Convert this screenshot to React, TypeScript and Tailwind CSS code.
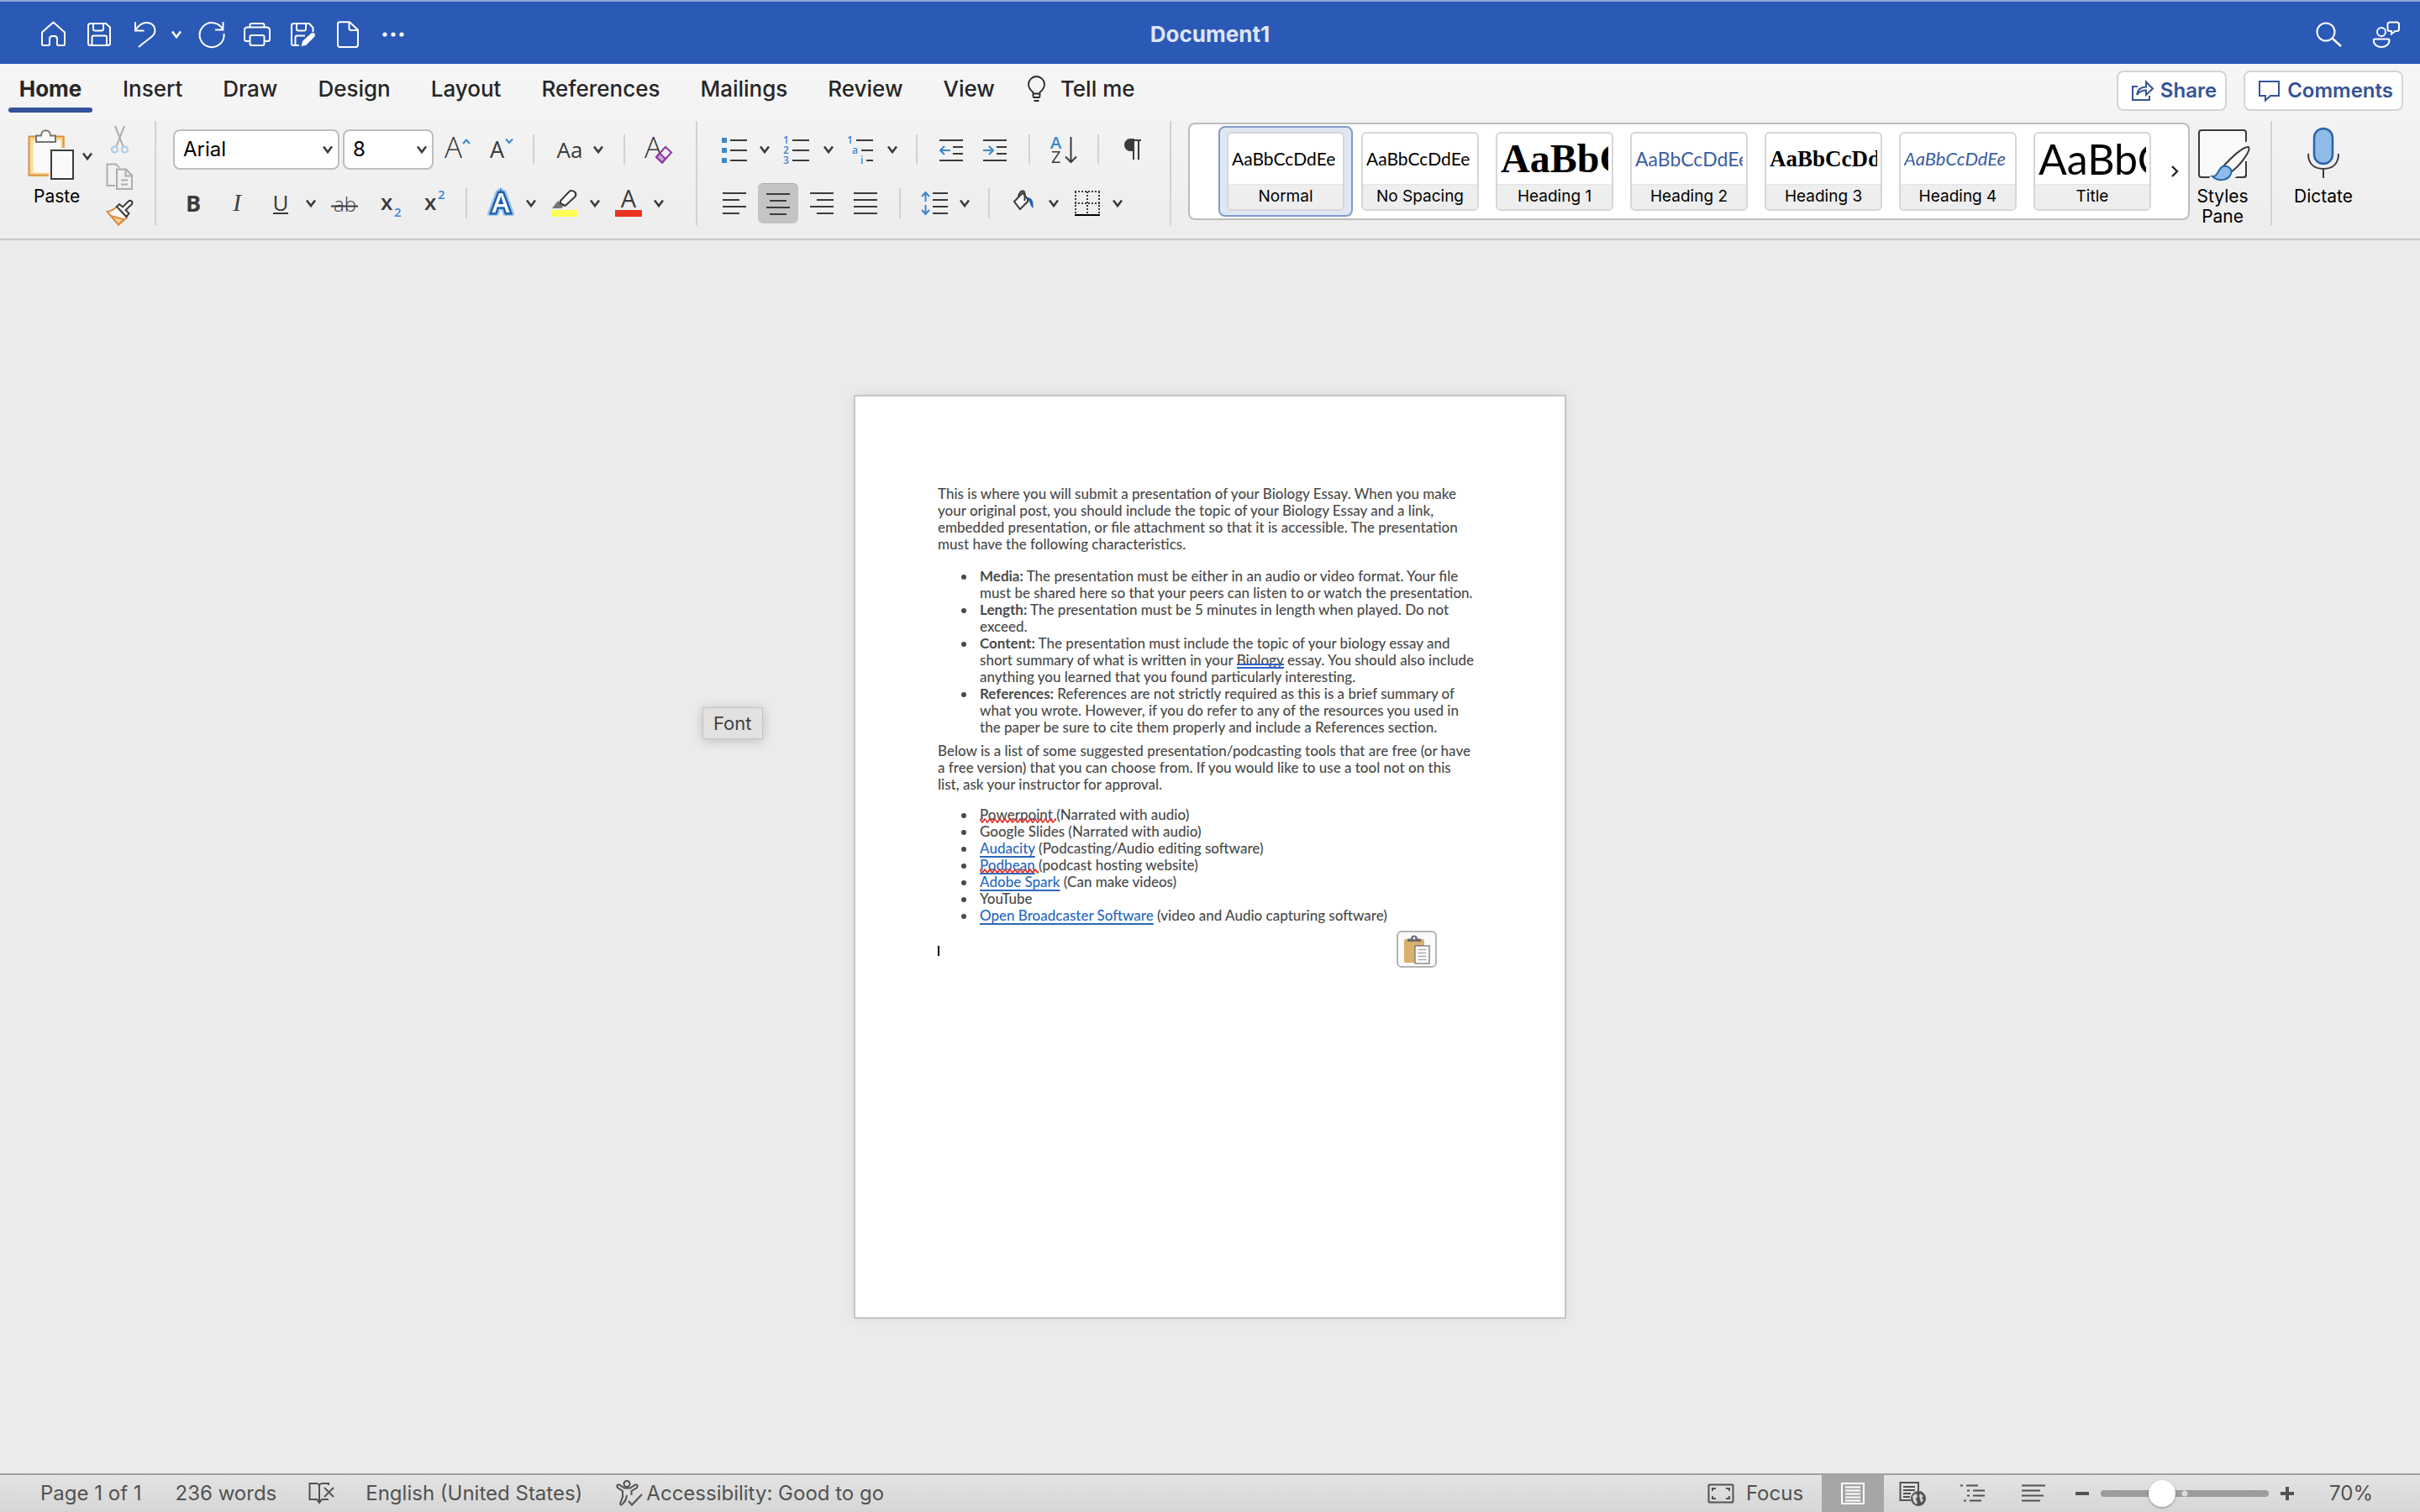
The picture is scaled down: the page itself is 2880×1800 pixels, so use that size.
import type { ReactNode } from "react";

const TABS = [
  "Insert",
  "Draw",
  "Design",
  "Layout",
  "References",
  "Mailings",
  "Review",
  "View",
];

const STYLES = [
  { name: "Normal", look: "font-['Lato',sans-serif] text-[21px] text-black", selected: true },
  { name: "No Spacing", look: "font-['Lato',sans-serif] text-[21px] text-black" },
  { name: "Heading 1", look: "font-['Liberation_Serif',serif] text-[48px] font-bold text-black" },
  { name: "Heading 2", look: "font-['Lato',sans-serif] text-[23px] text-[#3a5da0]" },
  { name: "Heading 3", look: "font-['Liberation_Serif',serif] text-[27px] font-bold text-black" },
  { name: "Heading 4", look: "font-['Lato',sans-serif] text-[22px] italic text-[#3a5da0]" },
  { name: "Title", look: "font-['Lato',sans-serif] text-[50px] text-black" },
];

function Icon({
  children,
  className = "size-8",
  box = "0 0 32 32",
}: {
  children: ReactNode;
  className?: string;
  box?: string;
}) {
  return (
    <svg
      viewBox={box}
      fill="none"
      stroke="currentColor"
      strokeWidth={2}
      aria-hidden="true"
      className={`shrink-0 overflow-visible ${className}`}
    >
      {children}
    </svg>
  );
}

function Chevron({ className = "" }: { className?: string }) {
  return (
    <Icon box="0 0 12 12" className={`size-3 ${className}`}>
      <path d="M1 2.5 L6 9 L11 2.5" strokeWidth={2.6} />
    </Icon>
  );
}

function Tool({
  label,
  className = "",
  children,
}: {
  label: string;
  className?: string;
  children: ReactNode;
}) {
  return (
    <button
      type="button"
      aria-label={label}
      className={`flex shrink-0 items-center justify-center ${className}`}
    >
      {children}
    </button>
  );
}

// Thin line between tools of the same group
function Rule({ className = "" }: { className?: string }) {
  return <span className={`h-9 w-0.5 shrink-0 bg-[#d2d2d2] ${className}`} />;
}

// Full height line between groups
function GroupRule() {
  return <span className="h-31 w-0.5 shrink-0 bg-[#d2d2d2]" />;
}

function TitleBar() {
  return (
    <header className="grid h-19 grid-cols-[1fr_auto_1fr] items-center border-t-2 border-[#8fa8da] bg-[#2b59b6] px-6 pt-1 text-white">
      <div className="flex items-center pl-6">
        <Tool label="Home">
          <Icon>
            <path d="M15.5 1.5 L2 13.5 V27.5 Q2 29 3.5 29 H9.5 Q11 29 11 27.5 V21.5 Q11 18 14 18 H17 Q20 18 20 21.5 V27.5 Q20 29 21.5 29 H27.5 Q29 29 29 27.5 V13.5 Z" strokeLinejoin="round" />
          </Icon>
        </Tool>
        <Tool label="Save" className="ml-5.5">
          <Icon>
            <path d="M3 5.5 Q3 3 5.5 3 H24 L29 7.5 V26.5 Q29 29 26.5 29 H5.5 Q3 29 3 26.5 Z M9 3 V9.5 Q9 11.5 11 11.5 H19 Q21 11.5 21 9.5 V3 M7.5 29 V19.5 Q7.5 17.5 9.5 17.5 H23 Q25 17.5 25 19.5 V29" />
          </Icon>
        </Tool>
        <Tool label="Undo" className="ml-5.5">
          <Icon>
            <path d="M5 1 V11.5 H15.5 M5 11.5 C9 4.5 15 1.5 20.5 2.2 C27 3 30.5 10 27 16 C25.5 18.6 16 25 9 31" />
          </Icon>
        </Tool>
        <Tool label="Undo options" className="ml-4">
          <Chevron />
        </Tool>
        <Tool label="Redo" className="ml-5">
          <Icon>
            <path d="M29.5 1 V10.5 H20 M29 10 A14.5 14.5 0 1 0 30.5 15" />
          </Icon>
        </Tool>
        <Tool label="Print" className="ml-5.5">
          <Icon>
            <path d="M8 24 H3.5 Q1 24 1 21.5 V11 Q1 7.5 4.5 7.5 H27.5 Q31 7.5 31 11 V21.5 Q31 24 28.5 24 H24.5 M7.5 7.5 V5 Q7.5 3 9.5 3 H22.5 Q24.5 3 24.5 5 V7.5 M7.5 19 Q7.5 17 9.5 17 H22.5 Q24.5 17 24.5 19 V27 Q24.5 29 22.5 29 H9.5 Q7.5 29 7.5 27 Z" />
          </Icon>
        </Tool>
        <Tool label="Save as" className="ml-5.5">
          <Icon>
            <path d="M28.5 13 V8 L24 3 H5.5 Q3 3 3 5.5 V26.5 Q3 29 5.5 29 H12 M9 3 V9.5 Q9 11.5 11 11.5 H18 Q20 11.5 20 9.5 V3 M7.5 29 V19.5 Q7.5 17.5 9.5 17.5 H19" />
            <path d="M14.5 30 L16 24 L26.5 14.5 Q29 13.5 30.5 15 Q32 17 30 19 L20 29 Z" fill="currentColor" stroke="none" />
          </Icon>
        </Tool>
        <Tool label="New document" className="ml-5.5">
          <Icon>
            <path d="M4 3.5 Q4 1.2 6.5 1.2 H18 L28 10.5 V28 Q28 31 25.5 31 H6.5 Q4 31 4 28 Z M17.5 1.5 V8.5 Q17.5 11 20 11 H27.5" />
          </Icon>
        </Tool>
        <Tool label="More" className="ml-5.5">
          <Icon>
            <g fill="currentColor" stroke="none">
              <circle cx="6" cy="16" r="2.6" />
              <circle cx="16" cy="16" r="2.6" />
              <circle cx="26" cy="16" r="2.6" />
            </g>
          </Icon>
        </Tool>
      </div>
      <h1 className="text-[26px] font-bold leading-8 text-[#dde5f5]">Document1</h1>
      <div className="flex items-center justify-end gap-9">
        <Tool label="Search">
          <Icon>
            <circle cx="12" cy="13" r="10.5" />
            <path d="M19.5 20.5 L30 30" strokeWidth={2.4} />
          </Icon>
        </Tool>
        <Tool label="Coauthors">
          <Icon>
            <circle cx="10" cy="13" r="5" />
            <path d="M2 21.5 H18 Q19.5 21.5 19.5 23 C19.5 28 15 31 10 31 C5 31 0.8 28 0.8 23 Q0.8 21.5 2 21.5 Z M20 1.5 H28.5 Q31 1.5 31 4 V9.5 Q31 12 28.5 12 H26.5 L22 15.5 V12 H20 Q17.5 12 17.5 9.5 V4 Q17.5 1.5 20 1.5 Z" />
          </Icon>
        </Tool>
      </div>
    </header>
  );
}

function TabRow() {
  return (
    <nav className="flex h-17 items-start pl-2.5 pr-5 text-[26px] leading-8 text-[#262626]">
      <a href="#home" className="flex w-25 flex-col items-center gap-1.5 pt-3.5 font-bold">
        Home
        <span className="h-1.5 w-full rounded-full bg-[#34539a]" />
      </a>
      <div className="flex items-center gap-12 pl-9 pt-3.5 font-medium">
        {TABS.map((tab) => (
          <a key={tab} href={`#${tab.toLowerCase()}`}>
            {tab}
          </a>
        ))}
      </div>
      <button type="button" className="flex items-center gap-3 pl-8.5 pt-3.5 font-medium">
        <Icon className="size-8">
          <path d="M11.5 24 V20 C8 17 6 14.5 6 10.5 A9.5 9.5 0 0 1 25 10.5 C25 14.5 23 17 19.5 20 V24 Q19.5 26 18 26 H13 Q11.5 26 11.5 24 Z M11.5 21.5 H19.5 M12.5 30 H18.5" strokeWidth={1.8} />
        </Icon>
        Tell me
      </button>
      <div className="ml-auto flex gap-5 pt-2 font-semibold text-[#34539a]">
        <button type="button" className="flex h-12 items-center gap-1.5 rounded-lg border-2 border-[#d4d4d4] bg-white pl-4 pr-2.5 text-[24px]">
          <Icon className="size-7" box="0 0 28 28">
            <path d="M7 9 H1 V25 H21 V20 M6 19 C7 12 11 9.5 17 9.5 V3.5 L25 11.5 L17 19 V13.5 C12 13.5 9 15 6 19 Z" />
          </Icon>
          Share
        </button>
        <button type="button" className="flex h-12 items-center gap-1.5 rounded-lg border-2 border-[#d4d4d4] bg-white pl-4 pr-2.5 text-[24px]">
          <Icon className="size-7" box="0 0 28 28">
            <path d="M1 3 H24 V20 H14 L8 25.5 V20 H1 Z" />
          </Icon>
          Comments
        </button>
      </div>
    </nav>
  );
}

function ClipboardGroup() {
  return (
    <div className="flex w-46 shrink-0 pl-8">
      <div className="flex w-20 flex-col pt-2.5">
        <button type="button" className="flex flex-col gap-1">
          <span className="flex items-center gap-2.5">
            <Icon box="0 0 56 64" className="h-16 w-14">
              <rect x="5" y="11" width="38" height="43" fill="#fafafa" stroke="#f5dc98" strokeWidth={5} />
              <rect x="2.5" y="8.5" width="41" height="46" stroke="#e08c44" />
              <path d="M11 15 V7.5 H17 C17 -1 28 -1 28 7.5 H34 V15 Z" fill="#fafafa" stroke="#76746f" />
              <rect x="26" y="22" width="30" height="40" fill="#f3f3f3" stroke="none" />
              <rect x="29" y="25" width="26" height="34" fill="#fafafa" stroke="#3b3b3b" />
            </Icon>
            <Chevron className="text-[#3b3b3b]" />
          </span>
          <span className="pl-2 text-left text-[21px] leading-6 text-black">Paste</span>
        </button>
      </div>
      <div className="flex flex-col gap-3 pl-3.5 pt-1.5">
        <Tool label="Cut">
          <Icon>
            <path d="M11 0 L20.5 24 M22 0 L12.5 24" stroke="#a9a9a9" />
            <circle cx="10.5" cy="28" r="3.5" stroke="#a9cbe8" />
            <circle cx="22.5" cy="28" r="3.5" stroke="#a9cbe8" />
          </Icon>
        </Tool>
        <Tool label="Copy">
          <Icon>
            <path d="M11 27 H1.5 V1.5 H12 L16 5.5 M13 7.5 H24 L31 15 V31 H13 Z M23.5 7.5 V15.5 H31 M18 20.5 H26 M18 25.5 H26" stroke="#adadad" />
          </Icon>
        </Tool>
        <Tool label="Format painter">
          <Icon>
            <path d="M1.5 14 Q8 13 13 8 L25 21 L15 29.5 Z" fill="#fafafa" stroke="#e08c44" />
            <path d="M6 19 L21 23 L15 29.5 Z" fill="#f5dc98" stroke="#e08c44" />
            <path d="M13 8 L16 5 L20 8.500 L27 1.500 Q29 0 31 2 Q32 4 30.500 5.500 L23.500 12 L27.500 16 L24.500 20 Z" fill="#fafafa" stroke="#3b3b3b" />
          </Icon>
        </Tool>
      </div>
    </div>
  );
}

function FontGroup() {
  return (
    <div className="flex shrink-0 flex-col gap-4 pl-5 pt-2.5 text-[#3b3b3b]">
      <div className="flex h-12 items-center pr-7">
        <label className="relative">
          <span className="sr-only">Font name</span>
          <select className="h-12 w-49.5 appearance-none rounded-lg border-2 border-[#bdbdbd] bg-white px-2.5 text-[24px] leading-8 text-black">
            <option>Arial</option>
          </select>
          <Chevron className="pointer-events-none absolute right-2 top-4.5" />
        </label>
        <label className="relative ml-1">
          <span className="sr-only">Font size</span>
          <select className="h-12 w-27 appearance-none rounded-lg border-2 border-[#bdbdbd] bg-white px-2.5 text-[24px] leading-8 text-black">
            <option>8</option>
          </select>
          <Chevron className="pointer-events-none absolute right-2 top-4.5" />
        </label>
        <Tool label="Increase font size" className="ml-3.5">
          <Icon>
            <text x="-1" y="26" fontSize="35" fill="currentColor" stroke="none" className="font-['Open_Sans',sans-serif] font-light">A</text>
            <path d="M21 9 L25 4.5 L29 9" stroke="#3b87cb" />
          </Icon>
        </Tool>
        <Tool label="Decrease font size" className="ml-5">
          <Icon>
            <text x="1" y="26" fontSize="27" fill="currentColor" stroke="none" className="font-['Open_Sans',sans-serif]">A</text>
            <path d="M20 3.5 L24 8 L28 3.5" stroke="#3b87cb" />
          </Icon>
        </Tool>
        <Rule className="ml-5" />
        <Tool label="Change case" className="ml-6">
          <span className="w-9 font-['Open_Sans',sans-serif] text-[26px]">Aa</span>
          <Chevron className="ml-2.5" />
        </Tool>
        <Rule className="mx-6" />
        <Tool label="Clear formatting">
          <Icon>
            <text x="-1" y="26" fontSize="35" fill="currentColor" stroke="none" className="font-['Open_Sans',sans-serif] font-light">A</text>
            <path d="M13 25 L24 13 L31 19.5 L20 31.5 Z" fill="#f8f2fa" stroke="#8f36a3" />
            <path d="M13 25 L17 20.5 L24 27 L20 31.5 Z" fill="#cf9fdb" stroke="#8f36a3" />
          </Icon>
        </Tool>
      </div>
      <div className="flex h-12 items-center pl-2">
        <Tool label="Bold" className="w-8 font-['Open_Sans',sans-serif] text-[27px] font-bold">
          B
        </Tool>
        <Tool label="Italic" className="ml-5 w-8 font-['Liberation_Serif',serif] text-[29px] italic">
          I
        </Tool>
        <Tool label="Underline" className="ml-5 w-8 font-['Open_Sans',sans-serif] text-[26px]">
          <span className="border-b-2 border-[#3b3b3b] leading-6">U</span>
        </Tool>
        <Chevron className="ml-3.5" />
        <Tool label="Strikethrough" className="ml-4.5">
          <Icon>
            <text x="3" y="26" fontSize="24" fill="currentColor" stroke="none" className="font-['Open_Sans',sans-serif] font-light">ab</text>
            <path d="M0 19.5 H32" />
          </Icon>
        </Tool>
        <Tool label="Subscript" className="ml-6">
          <Icon>
            <text x="3" y="24" fontSize="26" fill="currentColor" stroke="none" className="font-['Open_Sans',sans-serif] font-semibold">x</text>
            <text x="19" y="31.5" fontSize="15" fill="#3b87cb" stroke="none" className="font-['Open_Sans',sans-serif] font-semibold">2</text>
          </Icon>
        </Tool>
        <Tool label="Superscript" className="ml-5">
          <Icon>
            <text x="3" y="24" fontSize="26" fill="currentColor" stroke="none" className="font-['Open_Sans',sans-serif] font-semibold">x</text>
            <text x="19" y="11" fontSize="15" fill="#3b87cb" stroke="none" className="font-['Open_Sans',sans-serif] font-semibold">2</text>
          </Icon>
        </Tool>
        <Rule className="ml-5" />
        <Tool label="Text effects" className="ml-6">
          <Icon className="size-8 [filter:drop-shadow(2px_0_0_#9cc4ea)_drop-shadow(-2px_0_0_#9cc4ea)_drop-shadow(0_1px_0_#9cc4ea)_drop-shadow(0_-1px_0_#9cc4ea)]">
            <text x="16" y="27" fontSize="32" textAnchor="middle" fill="#ffffff" stroke="#1f5fae" strokeWidth={5} paintOrder="stroke" className="font-['Open_Sans',sans-serif] font-semibold">A</text>
          </Icon>
        </Tool>
        <Chevron className="ml-3.5" />
        <Tool label="Highlight colour" className="ml-4.5">
          <Icon>
            <path d="M1 22 L8 13 L15 19 L12 22 Z" fill="#76746f" stroke="none" />
            <path d="M11 13 L22 1.5 Q25 0 28 2.5 Q30.5 5 28.5 8 L16.5 19 L11 16 Z" fill="#fafafa" />
            <rect x="0" y="24" width="32" height="8" fill="#ffff54" stroke="none" />
          </Icon>
        </Tool>
        <Chevron className="ml-3.5" />
        <Tool label="Font colour" className="ml-4.5">
          <Icon>
            <text x="16" y="21" fontSize="29" textAnchor="middle" fill="currentColor" stroke="none" className="font-['Open_Sans',sans-serif]">A</text>
            <rect x="0" y="24" width="32" height="8" fill="#ea3323" stroke="none" />
          </Icon>
        </Tool>
        <Chevron className="ml-3.5" />
      </div>
    </div>
  );
}

function ParagraphGroup() {
  return (
    <div className="flex shrink-0 flex-col gap-4 pl-7 pr-7 pt-2.5 text-[#3b3b3b]">
      <div className="flex h-12 items-center">
        <Tool label="Bullets">
          <Icon>
            <path d="M11 5 H31 M11 17 H31 M11 29 H31" />
            <path d="M1 5 H7 M1 17 H7 M1 29 H7" stroke="#3b87cb" strokeWidth={6} />
          </Icon>
        </Tool>
        <Chevron className="ml-3.5" />
        <Tool label="Numbering" className="ml-4">
          <Icon>
            <path d="M11 5 H31 M11 17 H31 M11 29 H31" />
            <g fill="#3b87cb" stroke="none" fontSize="12" className="font-['Open_Sans',sans-serif] font-semibold">
              <text x="0" y="9">1</text>
              <text x="0" y="21">2</text>
              <text x="0" y="33">3</text>
            </g>
          </Icon>
        </Tool>
        <Chevron className="ml-4" />
        <Tool label="Multilevel list" className="ml-4">
          <Icon>
            <path d="M11 5 H31 M17 17 H31 M23 29 H31" />
            <g fill="#3b87cb" stroke="none" fontSize="12" className="font-['Open_Sans',sans-serif] font-semibold">
              <text x="0" y="9">1</text>
              <text x="6" y="21">a</text>
              <text x="16" y="33">i</text>
            </g>
          </Icon>
        </Tool>
        <Chevron className="ml-4" />
        <Rule className="ml-5.5" />
        <Tool label="Decrease indent" className="ml-6">
          <Icon>
            <path d="M2 5 H30 M18 13 H30 M18 21 H30 M2 29 H30" />
            <path d="M15 17 H3 M8 12 L3 17 L8 22" stroke="#3b87cb" />
          </Icon>
        </Tool>
        <Tool label="Increase indent" className="ml-5">
          <Icon>
            <path d="M2 5 H30 M18 13 H30 M18 21 H30 M2 29 H30" />
            <path d="M2 17 H14 M9 12 L14 17 L9 22" stroke="#3b87cb" />
          </Icon>
        </Tool>
        <Rule className="ml-6" />
        <Tool label="Sort" className="ml-6">
          <Icon>
            <text x="0" y="14.5" fontSize="20" fill="#3b87cb" stroke="none" className="font-['Open_Sans',sans-serif] font-semibold">A</text>
            <text x="1" y="32" fontSize="20" fill="currentColor" stroke="none" className="font-['Open_Sans',sans-serif]">Z</text>
            <path d="M24.5 1 V31 M18 24.5 L24.5 31 L31 24.5" />
          </Icon>
        </Tool>
        <Rule className="ml-6" />
        <Tool label="Show formatting marks" className="ml-6">
          <Icon>
            <path d="M17 5 H26 M17 4 V28 M23 4 V28" />
            <path d="M17 4 H13 A6 6.5 0 0 0 13 17 H17 Z" fill="currentColor" />
          </Icon>
        </Tool>
      </div>
      <div className="flex h-12 items-center">
        <Tool label="Align left">
          <Icon>
            <path d="M2 4 H30 M2 12 H22 M2 20 H30 M2 28 H22" />
          </Icon>
        </Tool>
        <Tool label="Centre" className="ml-3 size-12 rounded-md border-t border-[#ababab] bg-[#c4c4c4]">
          <Icon>
            <path d="M2 4 H30 M6 12 H26 M2 20 H30 M6 28 H26" />
          </Icon>
        </Tool>
        <Tool label="Align right" className="ml-3">
          <Icon>
            <path d="M2 4 H30 M10 12 H30 M2 20 H30 M10 28 H30" />
          </Icon>
        </Tool>
        <Tool label="Justify" className="ml-5">
          <Icon>
            <path d="M2 4 H30 M2 12 H30 M2 20 H30 M2 28 H30" />
          </Icon>
        </Tool>
        <Rule className="ml-6" />
        <Tool label="Line spacing" className="ml-6">
          <Icon>
            <path d="M14 4 H32 M14 12 H32 M14 20 H32 M14 28 H32" />
            <path d="M5.5 3 V14 M1 8 L5.5 3 L10 8 M5.5 18 V29 M1 24 L5.5 29 L10 24" stroke="#3b87cb" />
          </Icon>
        </Tool>
        <Chevron className="ml-3.5" />
        <Rule className="ml-5.5" />
        <Tool label="Shading" className="ml-6">
          <Icon>
            <path d="M5 14 L15 3.5 L21 11 L21 14 L12 23 Z" fill="#fafafa" />
            <path d="M10 8 C12 0 17 0 17.5 4 L17.5 13" />
            <path d="M20 9 C27 9 28 15 27.5 22 C24 19 24 14 20 9 Z" fill="#1f5fae" stroke="none" />
          </Icon>
        </Tool>
        <Chevron className="ml-3.5" />
        <Tool label="Borders" className="ml-4.5">
          <Icon>
            <path d="M1 2 H31 M1 16 H31 M2 2 V28 M16 2 V28 M30 2 V28" strokeDasharray="2 2" />
            <path d="M1 30 H31" stroke="#000000" />
          </Icon>
        </Tool>
        <Chevron className="ml-3.5" />
      </div>
    </div>
  );
}

function StyleGallery() {
  return (
    <div className="mt-0.5 flex h-29 min-w-0 flex-1 items-center overflow-hidden rounded-lg border-2 border-[#bdbdbd] bg-white pl-8.5">
      {STYLES.map((style) => (
        <button
          key={style.name}
          type="button"
          className={
            style.selected
              ? "h-27 shrink-0 rounded-lg border-2 border-[#7f9bcb] bg-[#dfe7f3] px-2"
              : "h-27 shrink-0 border-2 border-transparent px-2"
          }
        >
          <span className="flex h-23.5 w-35 flex-col overflow-hidden rounded-md border-2 border-[#d6d6d6] bg-white">
            <span className="flex h-15 items-center overflow-hidden px-1">
              <span className={`w-32 overflow-hidden whitespace-nowrap text-left leading-15 ${style.look}`}>
                AaBbCcDdEe
              </span>
            </span>
            <span className="flex-1 border-t border-[#e4e4e4] bg-[#eeeeee] text-center text-[19px] leading-7 text-black">
              {style.name}
            </span>
          </span>
        </button>
      ))}
      <Tool label="More styles" className="ml-auto mr-2.5 text-[#262626]">
        <Icon box="0 0 12 16" className="h-4 w-3">
          <path d="M3 2 L9 8 L3 14" strokeWidth={2.4} />
        </Icon>
      </Tool>
    </div>
  );
}

function Ribbon() {
  return (
    <div className="flex h-35.5 items-start border-b-2 border-[#c8c8c8]">
      <ClipboardGroup />
      <GroupRule />
      <FontGroup />
      <GroupRule />
      <ParagraphGroup />
      <GroupRule />
      <div className="flex min-w-0 flex-1 pl-5">
        <StyleGallery />
      </div>
      <button type="button" className="flex w-24 shrink-0 flex-col items-center gap-2 pr-4.5 pt-1.5 text-[21px] leading-6 text-black">
        <Icon box="0 0 64 64" className="size-16">
          <path d="M4 8 Q4 5 7 5 H57 Q60 5 60 8 V58 Q60 61 57 61 H7 Q4 61 4 58 Z" fill="#fafafa" stroke="#3b3b3b" />
          <path d="M16 62 L34 44 L61 18 V26 L62 52 L46 62 Z" fill="#f6f6f6" stroke="none" />
          <path d="M60 42 V58 Q60 61 57 61 H49" stroke="#3b3b3b" />
          <path d="M33 48 C40 40 56 24 63 25 C66 29 54 46 42 55 Z" fill="#fafafa" stroke="#3b3b3b" />
          <path d="M20 60 C27 61 26 50 33 48 C40 47 44 52 42 57 C38 66 26 66 20 60 Z" fill="#8fbbe8" stroke="#2a64ad" />
        </Icon>
        <span>
          Styles
          <br />
          Pane
        </span>
      </button>
      <GroupRule />
      <button type="button" className="mr-20 flex shrink-0 flex-col items-center gap-2 pl-6.5 pt-1.5 text-[21px] leading-6 text-black">
        <Icon box="0 0 64 64" className="size-16">
          <rect x="21" y="3" width="22" height="42" rx="11" fill="#8fbbe8" stroke="#2a64ad" strokeWidth={2.5} />
          <path d="M14 33 C14 46 22 51 32 51 C42 51 50 46 50 33 M32 51 V62" stroke="#3b3b3b" />
        </Icon>
        Dictate
      </button>
    </div>
  );
}

function DocLink({ children }: { children: ReactNode }) {
  return (
    <a
      href="#link"
      className="text-[#2a69bd] underline decoration-2 underline-offset-3 [text-decoration-skip-ink:none]"
    >
      {children}
    </a>
  );
}

// Word with the red squiggle of the spell checker under it
function Misspelt({ id, children }: { id: string; children: ReactNode }) {
  return (
    <span className="relative whitespace-pre">
      {children}
      <svg className="absolute bottom-0 left-0 h-1.5 w-full" aria-hidden="true">
        <pattern id={id} width="6" height="6" patternUnits="userSpaceOnUse">
          <path d="M-1 0 L0 1 L3 5 L6 1 L7 0" fill="none" stroke="#e0342b" strokeWidth={1.7} />
        </pattern>
        <rect width="100%" height="6" fill={`url(#${id})`} />
      </svg>
    </span>
  );
}

function DocumentPage() {
  return (
    <article className="relative min-h-[1100px] w-[848px] border-2 border-[#c6c6c6] bg-white pl-24.5 pr-20 pt-26.5 font-['Lato',sans-serif] text-[17px] font-medium leading-5 text-[#4a4a4a] shadow-[0_0_14px_rgba(0,0,0,0.08)]">
      <p className="whitespace-nowrap">
        This is where you will submit a presentation of your Biology Essay. When you make
        <br />
        your original post, you should include the topic of your Biology Essay and a link,
        <br />
        embedded presentation, or file attachment so that it is accessible. The presentation
        <br />
        must have the following characteristics.
      </p>
      <ul className="mt-4.5 list-disc whitespace-nowrap pl-11.5 [&>li]:pl-1">
        <li>
          <b>Media:</b> The presentation must be either in an audio or video format. Your file
          <br />
          must be shared here so that your peers can listen to or watch the presentation.
        </li>
        <li>
          <b>Length:</b> The presentation must be 5 minutes in length when played. Do not
          <br />
          exceed.
        </li>
        <li>
          <b>Content:</b> The presentation must include the topic of your biology essay and
          <br />
          short summary of what is written in your{" "}
          <span className="relative">
            Biology
            <span className="absolute bottom-0 left-0 h-1.5 w-full border-y-2 border-[#2f5fd0]" />
          </span>{" "}
          essay. You should also include
          <br />
          anything you learned that you found particularly interesting.
        </li>
        <li>
          <b>References:</b> References are not strictly required as this is a brief summary of
          <br />
          what you wrote. However, if you do refer to any of the resources you used in
          <br />
          the paper be sure to cite them properly and include a References section.
        </li>
      </ul>
      <p className="mt-2 whitespace-nowrap">
        Below is a list of some suggested presentation/podcasting tools that are free (or have
        <br />
        a free version) that you can choose from. If you would like to use a tool not on this
        <br />
        list, ask your instructor for approval.
      </p>
      <ul className="mt-4 list-disc pl-11.5 [&>li]:pl-1">
        <li>
          <Misspelt id="squiggle-powerpoint">Powerpoint </Misspelt>
          (Narrated with audio)
        </li>
        <li>Google Slides (Narrated with audio)</li>
        <li>
          <DocLink>Audacity</DocLink> (Podcasting/Audio editing software)
        </li>
        <li>
          <Misspelt id="squiggle-podbean">
            <DocLink>Podbean</DocLink>{" "}
          </Misspelt>
          (podcast hosting website)
        </li>
        <li>
          <DocLink>Adobe Spark</DocLink> (Can make videos)
        </li>
        <li>YouTube</li>
        <li>
          <DocLink>Open Broadcaster Software</DocLink> (video and Audio capturing software)
        </li>
      </ul>
      <div className="mt-6.5 h-3 w-0.5 bg-black" />
      <button
        type="button"
        aria-label="Paste options"
        className="absolute right-38 top-159 flex h-11 w-12 items-center justify-center rounded-md border-2 border-[#b4b4b4] bg-[#fafafa]"
      >
        <Icon box="0 0 32 36" className="h-9 w-8">
          <rect x="1" y="6" width="24" height="28" rx="2" fill="#d9b06c" stroke="none" />
          <path d="M5 9 V5.5 H9 C9 0 17 0 17 5.5 H21 V9 Z" fill="#6b6b6b" stroke="none" />
          <circle cx="13" cy="5" r="1.4" fill="#ffffff" stroke="none" />
          <rect x="14" y="14" width="17" height="21" fill="#ffffff" stroke="#6b6b6b" strokeWidth={1.2} />
          <path d="M17.5 18.5 H27.5 M17.5 22.5 H27.5 M17.5 26.5 H27.5 M17.5 30.5 H27.5" stroke="#a9a9a9" strokeWidth={1.6} />
        </Icon>
      </button>
    </article>
  );
}

function StatusBar() {
  return (
    <footer className="flex h-11.5 items-center border-t-2 border-[#a2a2a2] bg-linear-to-b from-[#e3e3e3] to-[#d6d6d6] pl-12 pr-14 text-[24px] text-[#525252]">
      <span>Page 1 of 1</span>
      <span className="ml-10">236 words</span>
      <Tool label="Proofing" className="ml-9.5">
        <Icon>
          <path d="M24 6 V4 H17 Q14 4 13 6 Q12 4 9 4 H1.5 V23 H10 L13 27 L16 23 H24 M13 6 V25 M19 9 L30 20 M30 9 L19 20" />
        </Icon>
      </Tool>
      <span className="ml-9">English (United States)</span>
      <button type="button" className="ml-10 flex items-center gap-1">
        <Icon>
          <circle cx="13" cy="4.5" r="3.5" />
          <path d="M8 28 Q6 31 5 28 L8 20 V13 L2 9 Q0 5 4 5.5 L10 9.5 H17 L23 5.5 Q27 5 25 9 L18.5 13 V18 M15 25 L19 29.5 L31 17 M13 18 Q12 25 8 28" />
        </Icon>
        Accessibility: Good to go
      </button>

      <button type="button" className="ml-auto flex items-center gap-3.5">
        <Icon box="0 0 32 24" className="h-6 w-8">
          <rect x="1.5" y="1.5" width="29" height="21" rx="1" />
          <path d="M6 9 V6 H10 M22 6 H26 V9 M26 15 V18 H22 M10 18 H6 V15" />
        </Icon>
        Focus
      </button>
      <Tool label="Print layout" className="ml-5.5 h-11 w-18.5 bg-[#a6a6a6] text-white">
        <Icon>
          <path d="M3 4 H29 V28 H3 Z M7 8.5 H25 M7 12.5 H25 M7 16.5 H25 M7 20.5 H25 M7 24.5 H25" />
        </Icon>
      </Tool>
      <Tool label="Web layout" className="ml-4.5">
        <Icon>
          <path d="M14 24 H1.5 V3 H23 V13 M5 8 H19 M5 12 H19 M5 16 H14 M5 20 H13" />
          <circle cx="23" cy="22" r="9" fill="currentColor" stroke="none" />
          <path d="M16 19 L20 16 L22 19 L20 23 L22 27 L20 29 L17 25 Z M25 16 L29 19 L27 21 L29 24 L26 27 L25 22 L24 19 Z" fill="#d4d4d4" stroke="none" />
        </Icon>
      </Tool>
      <Tool label="Outline" className="ml-10">
        <Icon>
          <path d="M1 6.5 H4 M8 6.5 H22 M9 12.5 H12 M16 12.5 H30 M9 18.5 H12 M16 18.5 H30 M5 24.5 H8 M12 24.5 H26" />
        </Icon>
      </Tool>
      <Tool label="Draft" className="ml-10">
        <Icon>
          <path d="M2 6.5 H30 M2 12.5 H24 M2 18.5 H28 M2 24.5 H24" />
        </Icon>
      </Tool>
      <Tool label="Zoom out" className="ml-8.5">
        <Icon box="0 0 16 16" className="size-4">
          <path d="M0 8 H16" strokeWidth={4} />
        </Icon>
      </Tool>
      <input
        type="range"
        aria-label="Zoom"
        min={0}
        max={100}
        defaultValue={34}
        className="ml-3.5 h-2 w-50 appearance-none rounded-full bg-[#9c9c9c] bg-[radial-gradient(circle_at_center,#dcdcdc_3px,transparent_4px)] [&::-webkit-slider-thumb]:size-8 [&::-webkit-slider-thumb]:appearance-none [&::-webkit-slider-thumb]:rounded-full [&::-webkit-slider-thumb]:bg-white [&::-webkit-slider-thumb]:shadow-[0_1px_3px_rgba(0,0,0,0.35)]"
      />
      <Tool label="Zoom in" className="ml-3.5">
        <Icon box="0 0 16 16" className="size-4">
          <path d="M0 8 H16 M8 0 V16" strokeWidth={4} />
        </Icon>
      </Tool>
      <span className="ml-10.5">70%</span>
    </footer>
  );
}

export default function App() {
  return (
    <div className="relative flex min-h-screen flex-col bg-[#ebebeb] font-['Inter',sans-serif]">
      <TitleBar />
      <div className="bg-linear-to-b from-[#f6f6f6] to-[#ededed]">
        <TabRow />
        <Ribbon />
      </div>
      <main className="flex flex-1 items-start justify-center pb-10 pt-46">
        <DocumentPage />
      </main>
      <StatusBar />

      {/* Hover hint of the font box */}
      <div
        role="tooltip"
        className="absolute left-[836px] top-[842px] border border-[#c4c4c4] bg-[#e2e1df] px-3 text-[22px] leading-9 text-[#404040] shadow-[0_2px_14px_rgba(0,0,0,0.2)]"
      >
        Font
      </div>
    </div>
  );
}
